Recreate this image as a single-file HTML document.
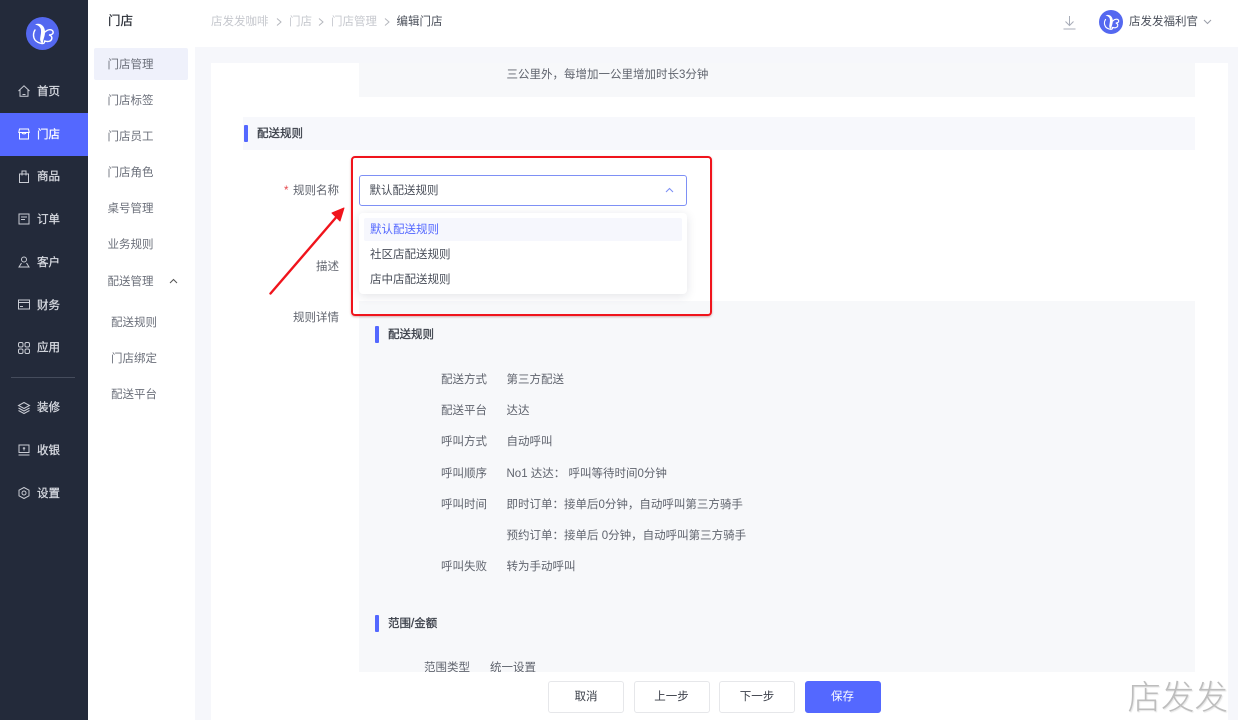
<!DOCTYPE html>
<html lang="zh"><head><meta charset="utf-8"><title>编辑门店</title>
<style>
*{box-sizing:border-box}
html,body{margin:0;padding:0}
body{width:1238px;height:720px;position:relative;overflow:hidden;background:#f6f7fb;font-family:"Liberation Sans","Noto Sans CJK SC",sans-serif;font-size:11.5px;color:#4a4f5a}
.a{position:absolute}
.t{position:absolute;white-space:nowrap;line-height:18px;height:18px;margin-top:1px}
.side{left:0;top:0;width:88px;height:720px;background:#232a3a}
.nav{color:#d8dbe2;font-size:11.5px;left:37px;-webkit-text-stroke:.25px #d8dbe2}
.sec{left:88px;top:0;width:107px;height:720px;background:#fff}
.m{color:#6b6f7a;left:107.5px}
.bar{width:3.5px;background:#5468ff;border-radius:1px}
.h{color:#3c404a;-webkit-text-stroke:.3px #3c404a}
.l{color:#60646e;left:441px}
.v{color:#60646e;left:506.5px}
.btn{position:absolute;top:681px;height:32px;width:76px;border:1px solid #e6e7ea;border-radius:3px;background:#fff;text-align:center;line-height:31px;color:#3c404a}
svg{position:absolute;overflow:visible}
.ic{fill:none;stroke:#c9ccd4;stroke-width:1}
</style></head><body>
<div class="a side"></div>
<div class="a" style="left:0;top:113px;width:88px;height:43px;background:#5468ff"></div>
<div class="a" style="left:11px;top:377px;width:64px;height:1px;background:#454c5c"></div>

<svg style="left:26px;top:17px" width="33" height="33" viewBox="0 0 33 33"><circle cx="16.5" cy="16.5" r="16.5" fill="#5468f0"/><path d="M9 7.500C14 5 19.500 9 19 16c-.3 4-2.200 7-2 10-2 0-3.200-2-2.800-5 .4-3 1.300-6 .6-9-.8-2.500-3-4-5.800-4.500z" fill="#fff"/><path d="M9 13c-2 3-2 7 0 10 1.500 2 4 3 7 3.500 2 .3 3-1 2.500-2.500M19 15c3-3 7-3 8-.5.700 2-1 3.500-4 3.500 2.500.5 3.500 2.500 2.500 4.500-1 2-4 2.500-6.500 1.500" fill="none" stroke="#fff" stroke-width="1.400" stroke-linecap="round"/></svg>

<svg class="ic" style="left:18px;top:85px" width="12" height="12" viewBox="0 0 12 12"><path d="M.5 6 6 .8 11.500 6M2 5v6.300h8V5M4.500 9.500h3"/></svg>
<span class="t nav" style="top:82px">首页</span>
<svg class="ic" style="left:18px;top:128px;stroke:#fff" width="12" height="12" viewBox="0 0 12 12"><path d="M1.500 1h9l.7 3.500H.8zM1.500 4.500V11h9V4.500M4 4.500c0 1.800 4 1.800 4 0"/></svg>
<span class="t nav" style="top:124.500px;color:#fff;-webkit-text-stroke:.25px #fff">门店</span>
<svg class="ic" style="left:19px;top:170px" width="10" height="13" viewBox="0 0 10 13"><path d="M.5 4h9v8.500h-9zM3 5.500V1h4v4.500"/></svg>
<span class="t nav" style="top:167px">商品</span>
<svg class="ic" style="left:18px;top:213px" width="12" height="12" viewBox="0 0 12 12"><path d="M1 1h10v10H1zM3 4h6M3 6.500h4"/></svg>
<span class="t nav" style="top:210px">订单</span>
<svg class="ic" style="left:18px;top:256px" width="12" height="12" viewBox="0 0 12 12"><circle cx="6" cy="3.500" r="2.500"/><path d="M3.500 7 1 11h10L8.500 7"/></svg>
<span class="t nav" style="top:252.500px">客户</span>
<svg class="ic" style="left:18px;top:299px" width="12" height="11" viewBox="0 0 12 11"><path d="M.5 1h11v9H.5zM.5 3.500h11M2 7.500h3"/></svg>
<span class="t nav" style="top:295.500px">财务</span>
<svg class="ic" style="left:18px;top:342px" width="12" height="12" viewBox="0 0 12 12"><rect x=".5" y=".5" width="4.500" height="4.500" rx="1.500"/><rect x="7" y=".5" width="4.500" height="4.500" rx="1.500"/><rect x=".5" y="7" width="4.500" height="4.500" rx="1.500"/><rect x="7" y="7" width="4.500" height="4.500" rx="1.500"/></svg>
<span class="t nav" style="top:338px">应用</span>
<svg class="ic" style="left:18px;top:402px" width="12" height="12" viewBox="0 0 12 12"><path d="M6 .5 11.500 3.500 6 6.500.5 3.500zM.5 6 6 9l5.500-3M.5 8.500 6 11.500l5.500-3"/></svg>
<span class="t nav" style="top:398px">装修</span>
<svg class="ic" style="left:18px;top:444px" width="12" height="12" viewBox="0 0 12 12"><path d="M1 1h10v7.500H1zM.5 11h11"/><path d="M6 3v3.500M4.800 4.200h2.400"/></svg>
<span class="t nav" style="top:441px">收银</span>
<svg class="ic" style="left:18px;top:487px" width="12" height="12" viewBox="0 0 12 12"><path d="M6 .5 11 3.200v5.600L6 11.500 1 8.800V3.200z"/><circle cx="6" cy="6" r="2"/></svg>
<span class="t nav" style="top:484px">设置</span>

<div class="a sec"></div>
<span class="t" style="left:108px;top:11px;font-size:12.500px;color:#2e323a;-webkit-text-stroke:.25px #2e323a">门店</span>
<div class="a" style="left:94px;top:48px;width:94px;height:32px;background:#eff1fb;border-radius:2px"></div>
<span class="t m" style="top:55px">门店管理</span>
<span class="t m" style="top:91px">门店标签</span>
<span class="t m" style="top:127px">门店员工</span>
<span class="t m" style="top:163px">门店角色</span>
<span class="t m" style="top:199px">桌号管理</span>
<span class="t m" style="top:235px">业务规则</span>
<span class="t m" style="top:272px">配送管理</span>
<svg style="left:169px;top:278px" width="9" height="6" viewBox="0 0 9 6"><path d="M1 5 4.500 1.500 8 5" fill="none" stroke="#555" stroke-width="1"/></svg>
<span class="t m" style="top:313px;left:111px">配送规则</span>
<span class="t m" style="top:349px;left:111px">门店绑定</span>
<span class="t m" style="top:385px;left:111px">配送平台</span>

<div class="a" style="left:195px;top:0;width:1043px;height:47px;background:#fff"></div>
<span class="t" style="left:211px;top:12px;color:#c6c8ce">店发发咖啡</span>
<svg style="left:276px;top:18px" width="6" height="8" viewBox="0 0 6 8"><path d="M1 .5 5 4 1 7.500" fill="none" stroke="#b5b7bd" stroke-width="1"/></svg>
<span class="t" style="left:289px;top:12px;color:#c6c8ce">门店</span>
<svg style="left:318px;top:18px" width="6" height="8" viewBox="0 0 6 8"><path d="M1 .5 5 4 1 7.500" fill="none" stroke="#b5b7bd" stroke-width="1"/></svg>
<span class="t" style="left:331px;top:12px;color:#c6c8ce">门店管理</span>
<svg style="left:384px;top:18px" width="6" height="8" viewBox="0 0 6 8"><path d="M1 .5 5 4 1 7.500" fill="none" stroke="#b5b7bd" stroke-width="1"/></svg>
<span class="t" style="left:396.500px;top:12px;color:#4a4f5a">编辑门店</span>
<svg style="left:1063px;top:15px" width="13" height="15" viewBox="0 0 13 15"><path d="M6.500 1v9.500M2.500 6.500l4 4 4-4M.5 14h12" fill="none" stroke="#a8adb8" stroke-width="1"/></svg>
<svg style="left:1099px;top:10px" width="24" height="24" viewBox="0 0 33 33"><circle cx="16.500" cy="16.500" r="16.500" fill="#5468f0"/><path d="M9 7.500C14 5 19.500 9 19 16c-.3 4-2.200 7-2 10-2 0-3.200-2-2.800-5 .4-3 1.300-6 .6-9-.8-2.500-3-4-5.800-4.500z" fill="#fff"/><path d="M9 13c-2 3-2 7 0 10 1.500 2 4 3 7 3.500 2 .3 3-1 2.500-2.500M19 15c3-3 7-3 8-.5.700 2-1 3.500-4 3.500 2.500.5 3.500 2.500 2.500 4.500-1 2-4 2.500-6.500 1.500" fill="none" stroke="#fff" stroke-width="1.600" stroke-linecap="round"/></svg>
<span class="t" style="left:1129px;top:12px;color:#4a4f5a">店发发福利官</span>
<svg style="left:1203px;top:19px" width="9" height="6" viewBox="0 0 9 6"><path d="M1 1 4.500 4.500 8 1" fill="none" stroke="#9a9ea8" stroke-width="1"/></svg>

<div class="a" style="left:211px;top:63px;width:1017px;height:657px;background:#fff"></div>
<div class="a" style="left:359px;top:63px;width:836px;height:34px;background:#f7f8fa"></div>
<span class="t v" style="top:65px">三公里外，每增加一公里增加时长3分钟</span>

<div class="a" style="left:243px;top:117px;width:952px;height:33px;background:#f7f8fc"></div>
<div class="a bar" style="left:244px;top:125px;height:17px"></div>
<span class="t h" style="left:257px;top:124px">配送规则</span>

<span class="t" style="left:284px;top:181px;color:#e5484d">*</span>
<span class="t" style="left:293px;top:181px;color:#60646e">规则名称</span>
<span class="t" style="left:316px;top:257px;color:#60646e">描述</span>
<span class="t" style="left:293px;top:308px;color:#60646e">规则详情</span>

<div class="a" style="left:359px;top:301px;width:836px;height:371px;background:#f7f8fa"></div>
<div class="a bar" style="left:375px;top:326px;height:17px"></div>
<span class="t h" style="left:388px;top:325px">配送规则</span>
<span class="t l" style="top:370px">配送方式</span><span class="t v" style="top:370px">第三方配送</span>
<span class="t l" style="top:401px">配送平台</span><span class="t v" style="top:401px">达达</span>
<span class="t l" style="top:432px">呼叫方式</span><span class="t v" style="top:432px">自动呼叫</span>
<span class="t l" style="top:464px">呼叫顺序</span><span class="t v" style="top:464px">No1 达达： 呼叫等待时间0分钟</span>
<span class="t l" style="top:495px">呼叫时间</span><span class="t v" style="top:495px">即时订单：接单后0分钟，自动呼叫第三方骑手</span>
<span class="t v" style="top:526px">预约订单：接单后 0分钟，自动呼叫第三方骑手</span>
<span class="t l" style="top:557px">呼叫失败</span><span class="t v" style="top:557px">转为手动呼叫</span>
<div class="a bar" style="left:375px;top:615px;height:17px"></div>
<span class="t h" style="left:388px;top:614px">范围/金额</span>
<span class="t" style="left:424px;top:658px;color:#60646e">范围类型</span>
<span class="t" style="left:490px;top:658px;color:#60646e">统一设置</span>

<div class="a" style="left:359px;top:175px;width:328px;height:31px;background:#fff;border:1px solid #7e90f5;border-radius:3px"></div>
<span class="t" style="left:369.500px;top:181px;color:#4a4f5a">默认配送规则</span>
<svg style="left:665px;top:187px" width="9" height="6" viewBox="0 0 9 6"><path d="M1 5 4.500 1.500 8 5" fill="none" stroke="#7e90f5" stroke-width="1.100"/></svg>
<div class="a" style="left:359px;top:213px;width:328px;height:81px;background:#fff;border-radius:4px;box-shadow:0 2px 10px rgba(30,40,70,.13)"></div>
<div class="a" style="left:364px;top:218px;width:318px;height:23px;background:#f6f7fd;border-radius:2px"></div>
<span class="t" style="left:370px;top:220px;color:#5468ff">默认配送规则</span>
<span class="t" style="left:370px;top:245px;color:#4a4f5a">社区店配送规则</span>
<span class="t" style="left:370px;top:270px;color:#4a4f5a">店中店配送规则</span>

<div class="a" style="left:351px;top:156px;width:361px;height:160px;border:2.500px solid #f0141c;border-radius:4px;box-shadow:0 1px 2px rgba(120,0,0,.3)"></div>
<svg style="left:265px;top:200px" width="90" height="100" viewBox="0 0 90 100"><path d="M5.500 93.500 74 14" fill="none" stroke="#f0141c" stroke-width="2.400" stroke-linecap="round"/><path d="M79 8 67 13 75 21z" fill="#f0141c" stroke="#f0141c" stroke-width="1" stroke-linejoin="round"/></svg>

<div class="a" style="left:211px;top:672px;width:1017px;height:48px;background:#fff"></div>
<div class="btn" style="left:548px">取消</div>
<div class="btn" style="left:633.500px">上一步</div>
<div class="btn" style="left:719px">下一步</div>
<div class="btn" style="left:804.500px;background:#5468ff;border-color:#5468ff;color:#fff">保存</div>

<span class="t" style="left:1127.500px;top:674px;height:40px;line-height:40px;font-size:33.500px;font-weight:300;font-family:'Noto Sans CJK SC',sans-serif;color:#bdbdbd;text-shadow:1px 1px 1px #e6e6e6">店发发</span>
</body></html>
